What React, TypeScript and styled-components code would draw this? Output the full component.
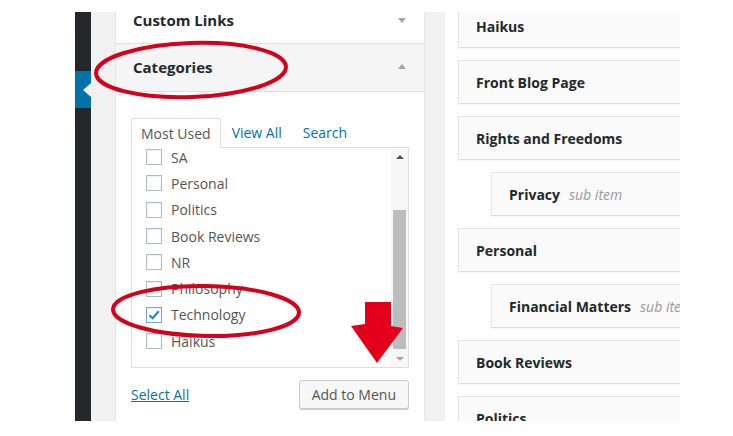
import styled, { createGlobalStyle } from "styled-components";

const GlobalStyle = createGlobalStyle`
  html, body {
    margin: 0;
    padding: 0;
    background: #fff;
  }
  body {
    font-family: "Open Sans", "Liberation Sans", sans-serif;
  }
`;

const Page = styled.div`
  position: relative;
  width: 733px;
  height: 436px;
  padding: 12px 0 0 75px;
  box-sizing: border-box;
  background: #fff;
  overflow: hidden;
`;

const Frame = styled.div`
  display: flex;
  width: 605px;
  height: 409px;
  background: #f1f1f1;
  overflow: hidden;
`;

const AdminMenu = styled.div`
  width: 16px;
  flex: none;
  background: #23282d;
`;

const CurrentItem = styled.div`
  position: relative;
  margin-top: 59px;
  height: 37px;
  background: #0073aa;
  &::after {
    content: "";
    position: absolute;
    right: 0;
    top: 50%;
    margin-top: -7px;
    border-style: solid;
    border-width: 7px 8px 7px 0;
    border-color: transparent #f1f1f1 transparent transparent;
  }
`;

const SidePanel = styled.div`
  width: 308px;
  flex: none;
  margin: -12px 0 0 24px;
  background: #fff;
  border-left: 1px solid #e5e5e5;
  border-right: 1px solid #e5e5e5;
`;

const SectionTitle = styled.div<{ $open?: boolean }>`
  display: flex;
  align-items: center;
  justify-content: space-between;
  box-sizing: border-box;
  height: ${(p) => (p.$open ? 48 : 44)}px;
  padding: 0 17px ${(p) => (p.$open ? 2 : 3)}px;
  border-bottom: 1px solid #dfdfdf;
  background: ${(p) => (p.$open ? "#f5f5f5" : "#fff")};
  color: #23282d;
  font-size: 15px;
  font-weight: 700;
`;

const Caret = styled.span<{ $up?: boolean }>`
  width: 0;
  height: 0;
  margin-right: 1px;
  border-left: 4px solid transparent;
  border-right: 4px solid transparent;
  ${(p) => (p.$up ? "border-bottom: 5px solid #a0a5aa;" : "border-top: 5px solid #a0a5aa;")}
`;

const SectionBody = styled.div`
  padding: 27px 15px 0 15px;
`;

const Tabs = styled.div`
  display: flex;
  gap: 1px;
  height: 28px;
`;

const Tab = styled.div<{ $active?: boolean }>`
  position: relative;
  z-index: 1;
  height: 28px;
  line-height: 28px;
  padding: 0 10px;
  font-size: 14px;
  box-sizing: content-box;
  color: ${(p) => (p.$active ? "#555" : "#0073aa")};
  ${(p) =>
    p.$active
      ? "border: 1px solid #ddd; border-bottom: none; background: #fff; margin-top: -1px; height: 29px; line-height: 29px; padding: 0 9px;"
      : ""}
`;

const ListBox = styled.div`
  display: flex;
  height: 219px;
  border: 1px solid #ddd;
  background: #fff;
  overflow: hidden;
`;

const Items = styled.ul`
  flex: 1;
  list-style: none;
  margin: -4px 0 0;
  padding: 0 0 0 14px;
`;

const Row = styled.li`
  display: flex;
  align-items: center;
  height: 26.3px;
  font-size: 14px;
  color: #555;
`;

const Box = styled.span<{ $checked?: boolean }>`
  display: flex;
  align-items: center;
  justify-content: center;
  width: 16px;
  height: 16px;
  box-sizing: border-box;
  margin-right: 9px;
  border: 1px solid ${(p) => (p.$checked ? "#7aa7c7" : "#b4b9be")};
  background: #fff;
  box-shadow: inset 0 1px 2px rgba(0, 0, 0, 0.07);
`;

const ScrollBar = styled.div`
  display: flex;
  flex-direction: column;
  width: 17px;
  background: #f7f7f7;
`;

const ScrollButton = styled.div<{ $down?: boolean }>`
  display: flex;
  align-items: center;
  justify-content: center;
  height: 17px;
  &::before {
    content: "";
    border-left: 4px solid transparent;
    border-right: 4px solid transparent;
    ${(p) =>
      p.$down ? "border-top: 4px solid #a3a3a3;" : "border-bottom: 4px solid #505050;"}
  }
`;

const Track = styled.div`
  flex: 1;
  padding: 45px 2px 0;
`;

const Thumb = styled.div`
  height: 139px;
  background: #bdbdbd;
`;

const Actions = styled.div`
  display: flex;
  align-items: center;
  justify-content: space-between;
  margin-top: 12px;
`;

const TextLink = styled.a`
  color: #0073aa;
  font-size: 14px;
  text-decoration: underline;
`;

const Button = styled.button`
  height: 29px;
  padding: 0 12px;
  border: 1px solid #ccc;
  border-radius: 3px;
  background: #f7f7f7;
  box-shadow: 0 1px 0 #ccc;
  color: #555;
  font-family: "Open Sans", "Liberation Sans", sans-serif;
  font-size: 14px;
`;

const MenuArea = styled.div`
  flex: 1;
  margin-left: 20px;
  padding-left: 13px;
  background: #fff;
  overflow: hidden;
`;

const MenuList = styled.div`
  display: flex;
  flex-direction: column;
  gap: 12px;
  margin-top: -8px;
`;

const MenuItem = styled.div<{ $depth?: number }>`
  display: flex;
  flex: none;
  align-items: center;
  width: 380px;
  height: 42px;
  margin-left: ${(p) => (p.$depth ? 33 * p.$depth : 0)}px;
  padding-left: 17px;
  border: 1px solid #e5e5e5;
  border-bottom-color: #dcdcdc;
  background: #fafafa;
  box-shadow: 0 1px 1px rgba(0, 0, 0, 0.04);
  color: #23282d;
  font-size: 14px;
  font-weight: 700;
  white-space: nowrap;
`;

const SubLabel = styled.span`
  margin-left: 9px;
  color: #999;
  font-size: 14px;
  font-style: italic;
  font-weight: 400;
`;

const Annotations = styled.svg`
  position: absolute;
  top: 0;
  left: 0;
  pointer-events: none;
`;

const categories = ["SA", "Personal", "Politics", "Book Reviews", "NR", "Philosophy", "Technology", "Haikus"];

const menuItems = [
  { label: "Haikus", depth: 0 },
  { label: "Front Blog Page", depth: 0 },
  { label: "Rights and Freedoms", depth: 0 },
  { label: "Privacy", depth: 1 },
  { label: "Personal", depth: 0 },
  { label: "Financial Matters", depth: 1 },
  { label: "Book Reviews", depth: 0 },
  { label: "Politics", depth: 0 },
];

export default function App() {
  return (
    <>
      <GlobalStyle />
      <Page>
        <Frame>
          <AdminMenu>
            <CurrentItem />
          </AdminMenu>
          <SidePanel>
            <SectionTitle>
              Custom Links
              <Caret />
            </SectionTitle>
            <SectionTitle $open>
              Categories
              <Caret $up />
            </SectionTitle>
            <SectionBody>
              <Tabs>
                <Tab $active>Most Used</Tab>
                <Tab>View All</Tab>
                <Tab>Search</Tab>
              </Tabs>
              <ListBox>
                <Items>
                  {categories.map((c) => (
                    <Row key={c}>
                      <Box $checked={c === "Technology"}>
                        {c === "Technology" && (
                          <svg width="14" height="14" viewBox="0 0 14 14">
                            <path d="M2.5 7.2 L5.6 10.2 L11.8 3.2" fill="none" stroke="#1e8cbe" strokeWidth="2.2" />
                          </svg>
                        )}
                      </Box>
                      {c}
                    </Row>
                  ))}
                </Items>
                <ScrollBar>
                  <ScrollButton />
                  <Track>
                    <Thumb />
                  </Track>
                  <ScrollButton $down />
                </ScrollBar>
              </ListBox>
              <Actions>
                <TextLink>Select All</TextLink>
                <Button>Add to Menu</Button>
              </Actions>
            </SectionBody>
          </SidePanel>
          <MenuArea>
            <MenuList>
              {menuItems.map((m) => (
                <MenuItem key={m.label} $depth={m.depth}>
                  {m.label}
                  {m.depth > 0 && <SubLabel>sub item</SubLabel>}
                </MenuItem>
              ))}
            </MenuList>
          </MenuArea>
        </Frame>
        <Annotations width="733" height="436" viewBox="0 0 733 436">
          <ellipse cx="191" cy="70" rx="95" ry="27" fill="none" stroke="#d4001c" strokeWidth="4" transform="rotate(-2 191 70)" />
          <ellipse cx="206" cy="311" rx="93" ry="25" fill="none" stroke="#d4001c" strokeWidth="4" transform="rotate(1 206 311)" />
          <polygon points="365,302 391,302 391,326 403,328 377,363 351,326 365,324" fill="#e2001a" />
        </Annotations>
      </Page>
    </>
  );
}
